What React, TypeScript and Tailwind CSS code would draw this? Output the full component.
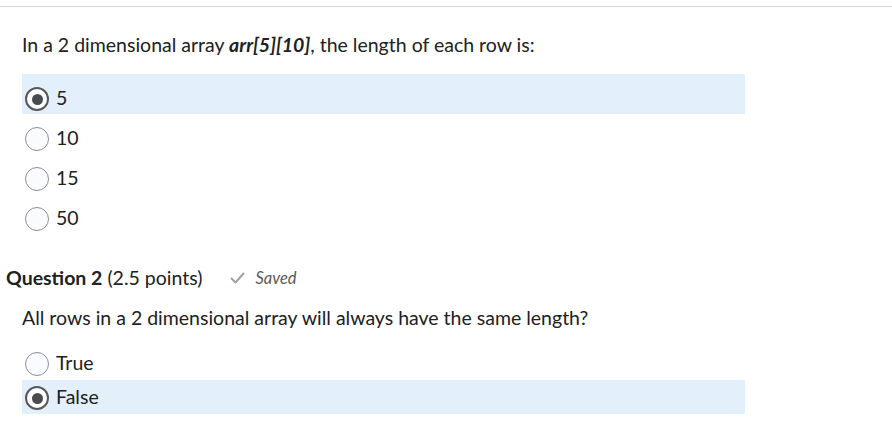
import React from "react";

type Choice = { label: string; checked?: boolean };

const q1: Choice[] = [
  { label: "5", checked: true },
  { label: "10" },
  { label: "15" },
  { label: "50" },
];

const q2: Choice[] = [{ label: "True" }, { label: "False", checked: true }];

function Radio({ checked }: { checked?: boolean }) {
  if (checked) {
    return (
      <span className="flex h-6 w-6 shrink-0 items-center justify-center rounded-full border-2 border-[#56595b] bg-white">
        <span className="h-[11px] w-[11px] rounded-full bg-[#494c4e]" />
      </span>
    );
  }
  return <span className="h-6 w-6 shrink-0 rounded-full border border-[#8a8f92] bg-[#f9fbff]" />;
}

function ChoiceRow({ choice, tall }: { choice: Choice; tall?: boolean }) {
  return (
    <div
      className={`flex items-start ${tall ? "h-[40px] pt-[13px]" : "h-[34px] pt-[6px]"} pl-[3px] ${
        choice.checked ? "bg-[#e4effc]" : ""
      }`}
    >
      <div className="flex h-6 items-center gap-[7px]">
        <Radio checked={choice.checked} />
        <span className="-mt-[2px] text-[19.5px] leading-6">{choice.label}</span>
      </div>
    </div>
  );
}

export default function App() {
  return (
    <div className="h-[442px] w-[892px] overflow-hidden bg-white font-['Lato','Noto_Sans',sans-serif] text-[#202122]">
      <div className="h-[6px]" />
      <div className="h-px bg-[#d3d9e3]" />

      <div className="w-[745px] pl-[22px]">
        <p className="mt-[24px] text-[19.5px] leading-[28px]">
          In a 2 dimensional array <b className="italic">arr[5][10]</b>, the length of each row is:
        </p>
        <div className="mt-[15px]">
          {q1.map((c) => (
            <ChoiceRow key={c.label} choice={c} tall />
          ))}
        </div>
      </div>

      <div className="mt-[30px] flex items-center pl-[6px] leading-[28px]">
        <h2 className="text-[19.5px]">
          <span className="font-bold">Question 2</span> (2.5 points)
        </h2>
        <span className="ml-[28px] flex items-center gap-[10px] text-[16.5px] italic text-[#565a5c]">
          <svg width="15" height="12" viewBox="0 0 15 12" fill="none">
            <path d="M1.5 6.5 L5.5 10.5 L13.5 1.5" stroke="#9ca2a6" strokeWidth="2" strokeLinecap="round" strokeLinejoin="round" />
          </svg>
          Saved
        </span>
      </div>

      <div className="w-[745px] pl-[22px]">
        <p className="mt-[12px] text-[19.5px] leading-[28px]">
          All rows in a 2 dimensional array will always have the same length?
        </p>
        <div className="mt-[14px]">
          {q2.map((c) => (
            <ChoiceRow key={c.label} choice={c} />
          ))}
        </div>
      </div>
    </div>
  );
}
